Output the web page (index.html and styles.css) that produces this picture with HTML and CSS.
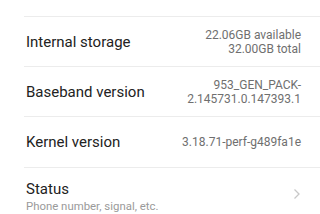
FILE: index.html
```html
<!DOCTYPE html>
<html lang="en">
<head>
    <meta charset="UTF-8">
    <meta name="viewport" content="width=device-width, initial-scale=1.0">
    <title>About phone</title>
    <link rel="stylesheet" href="styles.css">
</head>
<body>

    <div class="settings-list">
        <div class="row row-cut"></div>

        <div class="row">
            <span class="row-title">Internal storage</span>
            <span class="row-value">22.06GB available<br>32.00GB total</span>
        </div>

        <div class="row">
            <span class="row-title">Baseband version</span>
            <span class="row-value">953_GEN_PACK-<br>2.145731.0.147393.1</span>
        </div>

        <div class="row row-kernel">
            <span class="row-title">Kernel version</span>
            <span class="row-value">3.18.71-perf-g489fa1e</span>
        </div>

        <div class="row row-last">
            <div class="row-text">
                <span class="row-title">Status</span>
                <span class="row-sub">Phone number, signal, etc.</span>
            </div>
            <svg class="chevron" width="8" height="12" viewBox="0 0 8 12">
                <path d="M1.5 1.5 L6 6 L1.5 10.5" fill="none" stroke="#c8c8c8" stroke-width="1.3"/>
            </svg>
        </div>
    </div>

</body>
</html>
```

FILE: styles.css
```css
* {
    margin: 0;
    padding: 0;
    box-sizing: border-box;
}

body {
    font-family: Roboto, 'Noto Sans', sans-serif;
    background: #fff;
    color: #212121;
    width: 320px;
    height: 214px;
    overflow: hidden;
}

.settings-list {
    display: flex;
    flex-direction: column;
}

/* Строка настроек */
.row {
    display: flex;
    align-items: center;
    justify-content: space-between;
    height: 50px;
    margin-left: 24px;
    padding: 0 19px 0 2px;
    border-top: 1px solid #ececec;
}

.row-cut {
    height: 16px;
    border-top: none;
}

.row-kernel {
    height: 51px;
}

.row-last {
    height: 50px;
    align-items: flex-start;
    padding-top: 12px;
}

.row-title {
    font-size: 15px;
    color: #222;
}

.row-value {
    font-size: 12px;
    line-height: 14px;
    color: #6f6f6f;
    text-align: right;
}

.row-text {
    display: flex;
    flex-direction: column;
}

.row-sub {
    font-size: 11.4px;
    color: #9a9a9a;
    margin-top: 1px;
}

.chevron {
    margin-top: 8px;
}
```
